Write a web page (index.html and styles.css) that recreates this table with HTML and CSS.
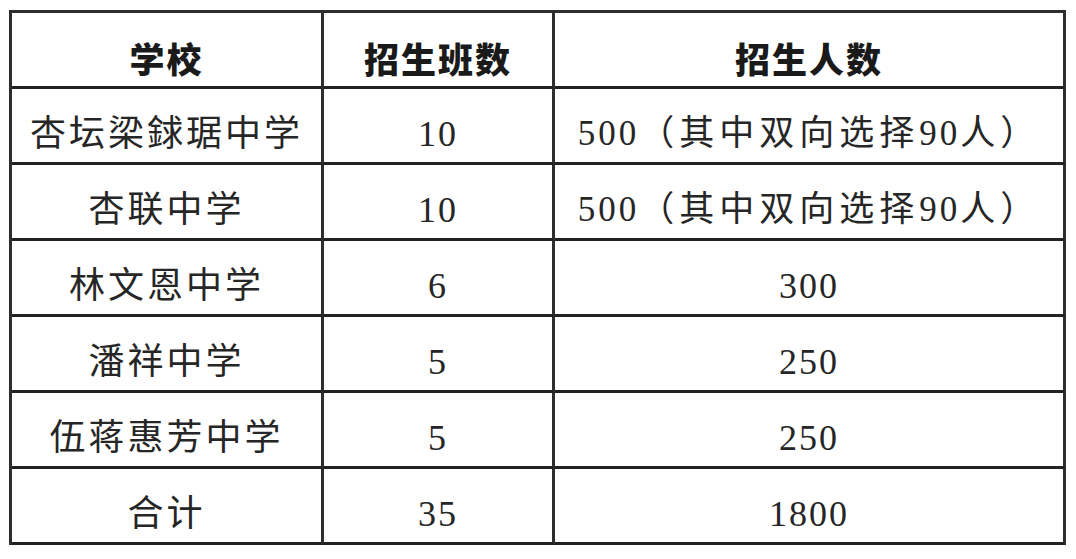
FILE: index.html
```html
<!DOCTYPE html>
<html lang="zh-CN">
<head>
<meta charset="utf-8">
<title>招生计划</title>
<link rel="stylesheet" href="styles.css">
</head>
<body>
<div class="table">
  <div class="cell head">学校</div>
  <div class="cell head">招生班数</div>
  <div class="cell head">招生人数</div>

  <div class="cell name">杏坛梁銶琚中学</div>
  <div class="cell">10</div>
  <div class="cell wide"><span class="num">500</span>（其中双向选择<span class="num">90</span>人）</div>

  <div class="cell name">杏联中学</div>
  <div class="cell">10</div>
  <div class="cell wide"><span class="num">500</span>（其中双向选择<span class="num">90</span>人）</div>

  <div class="cell name">林文恩中学</div>
  <div class="cell">6</div>
  <div class="cell">300</div>

  <div class="cell name">潘祥中学</div>
  <div class="cell">5</div>
  <div class="cell">250</div>

  <div class="cell name">伍蒋惠芳中学</div>
  <div class="cell">5</div>
  <div class="cell">250</div>

  <div class="cell name">合计</div>
  <div class="cell">35</div>
  <div class="cell">1800</div>
</div>
</body>
</html>
```
FILE: styles.css
```css
html, body {
  margin: 0;
  background: #ffffff;
}

body {
  padding: 10px 0 0 9px;
  font-family: "Liberation Serif", "Noto Sans CJK SC", serif;
  color: #262626;
}

.table {
  display: grid;
  grid-template-columns: 312px 231px 511px;
  grid-auto-rows: 76px;
  width: max-content;
  border-top: 3px solid #2e2e2e;
  border-left: 3px solid #2e2e2e;
}

.cell {
  box-sizing: border-box;
  display: flex;
  align-items: center;
  justify-content: center;
  padding-top: 16px;
  border-right: 3px solid #2e2e2e;
  border-bottom: 3px solid #222222;
  font-size: 36px;
  letter-spacing: 2px;
  line-height: 1;
  white-space: nowrap;
}

.name {
  letter-spacing: 3px;
}

.wide {
  font-size: 35px;
  letter-spacing: 5px;
}

.wide .num {
  letter-spacing: 3px;
}

.head {
  font-family: "Noto Sans CJK SC", sans-serif;
  font-weight: 900;
  font-size: 35px;
  letter-spacing: 2px;
  color: #1a1a1a;
}
```
